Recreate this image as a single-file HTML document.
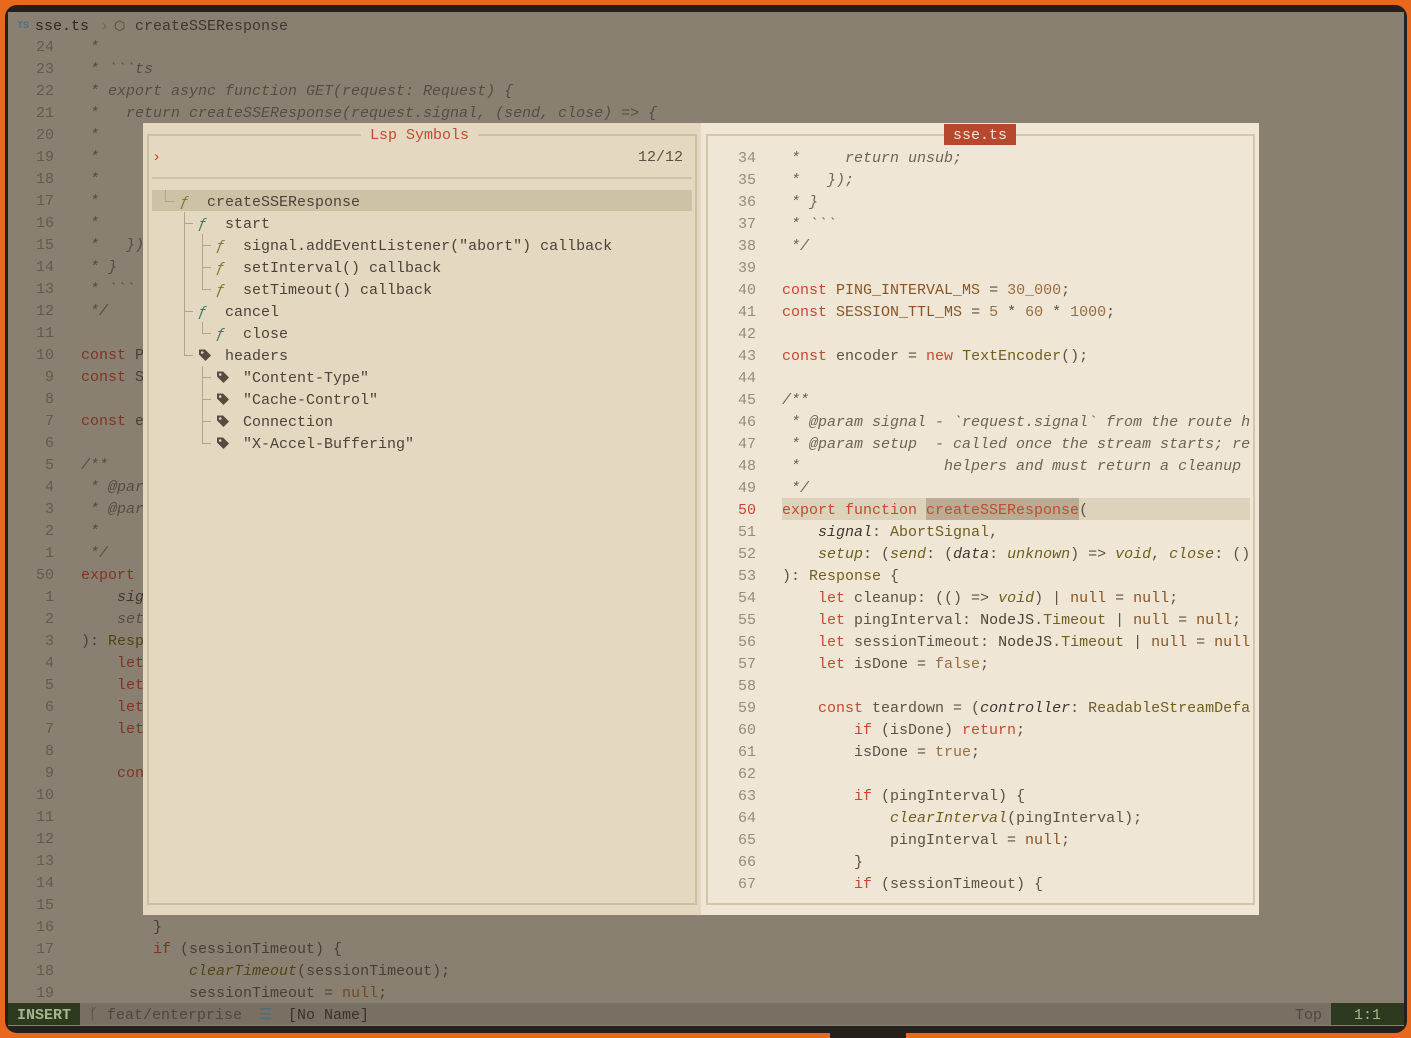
<!DOCTYPE html>
<html><head><meta charset="utf-8"><style>
*{margin:0;padding:0;box-sizing:border-box}
body{width:1411px;height:1038px;background:#e8691e;overflow:hidden;position:relative;font-family:"Liberation Mono","DejaVu Sans Mono",monospace;font-size:15px}
#win{position:absolute;left:5px;top:5px;width:1402px;height:1028px;background:#25201c;border-radius:12px}
#ed{position:absolute;left:8px;top:12px;width:1396px;height:1014px;background:#8a8072;overflow:hidden}
.r{position:absolute;height:22px;line-height:22px;white-space:pre}
#lines{position:absolute;left:0;top:25px}
#lines div{height:22px;line-height:22px;white-space:pre;color:#463f36}
#lines b{display:inline-block;width:46px;text-align:right;color:#625a4f;font-weight:normal;margin-right:27px}
.c{color:#554d42;font-style:italic}
.k{color:#7e3423}
.t{color:#4e4518}
#sb{position:absolute;left:0;top:991px;width:1396px;height:22px;background:#787062;line-height:25px;color:#4a443a}
#pop{position:absolute;left:143px;top:123px;width:1116px;height:792px}
#lp{position:absolute;left:0;top:0;width:558px;height:792px;background:#e4d8c1}
#lb{position:absolute;left:4px;top:11px;width:550px;height:771px;border:2px solid #cbbfa3}
#rp{position:absolute;left:558px;top:0;width:558px;height:792px;background:#f0e6d6}
#rb{position:absolute;left:5px;top:11px;width:549px;height:771px;border:2px solid #d3c6ab}
#tree{position:absolute;left:10px;top:69px}
#tree div{height:22px;line-height:22px;white-space:pre;color:#4b433a}
.fo{color:#8a7626;font-style:italic}
.fg{color:#3d7a66;font-style:italic}
.v,.h{position:absolute;background:#b0a489}
.v{width:1px}.h{height:1px}
.tg{display:inline-block;width:14px;height:14px;margin-right:-5px;vertical-align:-2px}
#rcode{position:absolute;left:0;top:25px;width:549px;height:758px;overflow:hidden}
#rcode div{height:22px;line-height:22px;white-space:pre;color:#5a5247}
#rcode b{display:inline-block;width:55px;text-align:right;color:#958b7c;font-weight:normal;margin-right:26px}
.K{color:#c24a32}
.C{color:#6c6458;font-style:italic}
.N{color:#9a6c3e}
.T{color:#6e5f1c}
.V{color:#8a5424}
.P{color:#4a4238}
.I{font-style:italic;color:#3e372f}
.IT{font-style:italic;color:#6e5f1c}
</style></head><body>
<div id="win"></div>
<div style="position:absolute;left:830px;top:1030px;width:76px;height:8px;background:#25201c"></div>
<div id="ed">
<div class="r" style="left:9px;top:4px;font-size:10px;color:#4d6f8a;font-weight:bold">TS</div>
<div class="r" style="left:27px;top:4px;color:#2e2822">sse.ts</div>
<div class="r" style="left:92px;top:4px;color:#6e665a">›</div>
<div class="r" style="left:106px;top:4px;color:#4a433a;font-size:13px">⬡</div>
<div class="r" style="left:127px;top:4px;color:#3e372f">createSSEResponse</div>
<div id="lines">
<div><b>24</b><span class="c"> *</span></div>
<div><b>23</b><span class="c"> * &#96;&#96;&#96;ts</span></div>
<div><b>22</b><span class="c"> * export async function GET(request: Request) {</span></div>
<div><b>21</b><span class="c"> *   return createSSEResponse(request.signal, (send, close) =&gt; {</span></div>
<div><b>20</b><span class="c"> *</span></div>
<div><b>19</b><span class="c"> *</span></div>
<div><b>18</b><span class="c"> *</span></div>
<div><b>17</b><span class="c"> *</span></div>
<div><b>16</b><span class="c"> *</span></div>
<div><b>15</b><span class="c"> *   });</span></div>
<div><b>14</b><span class="c"> * }</span></div>
<div><b>13</b><span class="c"> * &#96;&#96;&#96;</span></div>
<div><b>12</b><span class="c"> */</span></div>
<div><b>11</b></div>
<div><b>10</b><span class="k">const</span> PING</div>
<div><b>9</b><span class="k">const</span> SESS</div>
<div><b>8</b></div>
<div><b>7</b><span class="k">const</span> enc</div>
<div><b>6</b></div>
<div><b>5</b><span class="c">/**</span></div>
<div><b>4</b><span class="c"> * @param</span></div>
<div><b>3</b><span class="c"> * @param</span></div>
<div><b>2</b><span class="c"> *</span></div>
<div><b>1</b><span class="c"> */</span></div>
<div><b>50</b><span class="k">export</span> function</div>
<div><b>1</b>    <span class="c" style="color:#3e372f">signal</span></div>
<div><b>2</b>    <span class="c">setup</span></div>
<div><b>3</b>): <span class="t">Response</span></div>
<div><b>4</b>    <span class="k">let</span> x</div>
<div><b>5</b>    <span class="k">let</span> x</div>
<div><b>6</b>    <span class="k">let</span> x</div>
<div><b>7</b>    <span class="k">let</span> x</div>
<div><b>8</b></div>
<div><b>9</b>    <span class="k">const</span> x</div>
<div><b>10</b></div>
<div><b>11</b></div>
<div><b>12</b></div>
<div><b>13</b></div>
<div><b>14</b></div>
<div><b>15</b></div>
<div><b>16</b>        }</div>
<div><b>17</b>        <span class="k">if</span> (sessionTimeout) {</div>
<div><b>18</b>            <span class="c" style="color:#4e4518">clearTimeout</span>(sessionTimeout);</div>
<div><b>19</b>            sessionTimeout = <span class="k" style="color:#6e4a26">null</span>;</div>
</div>
<div id="sb">
<div style="position:absolute;left:0;top:0;width:72px;height:22px;background:#2e3a20;color:#a7b58d;text-align:center;font-weight:bold">INSERT</div>
<div style="position:absolute;left:81px;top:0;color:#4e473c">ᚴ feat/enterprise</div>
<div style="position:absolute;left:251px;top:0;color:#4f6a7c">☰</div>
<div style="position:absolute;left:280px;top:0;color:#38322a">[No Name]</div>
<div style="position:absolute;left:1287px;top:0;color:#4e473c">Top</div>
<div style="position:absolute;left:1323px;top:0;width:73px;height:22px;background:#2e3a20;color:#a7b58d;text-align:center">1:1</div>
</div>
</div>

<div id="pop">
<div id="lp"><div id="lb"></div>
<div class="r" style="left:218px;top:2px;background:#e4d8c1;padding:0 9px;color:#c24a32">Lsp Symbols</div>
<div class="r" style="left:9px;top:24px;color:#c24a32">›</div>
<div class="r" style="left:495px;top:24px;color:#5a5247">12/12</div>
<div style="position:absolute;left:9px;top:54px;width:540px;height:2px;background:#cfc3a8"></div>
<div style="position:absolute;left:9px;top:67px;width:540px;height:21px;background:#cdc2a5"></div>
<div class="v" style="left:22px;top:67px;height:12px"></div><div class="h" style="left:22px;top:78px;width:10px"></div>
<div class="v" style="left:41px;top:89px;height:144px"></div>
<div class="h" style="left:41px;top:100px;width:9px"></div><div class="h" style="left:41px;top:188px;width:9px"></div><div class="h" style="left:41px;top:232px;width:9px"></div>
<div class="v" style="left:59px;top:111px;height:56px"></div>
<div class="h" style="left:59px;top:122px;width:9px"></div><div class="h" style="left:59px;top:144px;width:9px"></div><div class="h" style="left:59px;top:166px;width:9px"></div>
<div class="v" style="left:59px;top:199px;height:12px"></div><div class="h" style="left:59px;top:210px;width:9px"></div>
<div class="v" style="left:59px;top:243px;height:78px"></div>
<div class="h" style="left:59px;top:254px;width:9px"></div><div class="h" style="left:59px;top:276px;width:9px"></div><div class="h" style="left:59px;top:298px;width:9px"></div><div class="h" style="left:59px;top:320px;width:9px"></div>
<div id="tree">
<div>   <span class="fo">ƒ</span>  createSSEResponse</div>
<div>     <span class="fg">ƒ</span>  start</div>
<div>       <span class="fo">ƒ</span>  signal.addEventListener("abort") callback</div>
<div>       <span class="fo">ƒ</span>  setInterval() callback</div>
<div>       <span class="fo">ƒ</span>  setTimeout() callback</div>
<div>     <span class="fg">ƒ</span>  cancel</div>
<div>       <span class="fg">ƒ</span>  close</div>
<div>     <svg class="tg" viewBox="0 0 14 14"><path d="M1 1.5h6l6 6-5.5 5.5-6.5-6.5z" fill="#554b3e"/><circle cx="4.2" cy="4.5" r="1.3" fill="#e4d8c1"/></svg>  headers</div>
<div>       <svg class="tg" viewBox="0 0 14 14"><path d="M1 1.5h6l6 6-5.5 5.5-6.5-6.5z" fill="#554b3e"/><circle cx="4.2" cy="4.5" r="1.3" fill="#e4d8c1"/></svg>  "Content-Type"</div>
<div>       <svg class="tg" viewBox="0 0 14 14"><path d="M1 1.5h6l6 6-5.5 5.5-6.5-6.5z" fill="#554b3e"/><circle cx="4.2" cy="4.5" r="1.3" fill="#e4d8c1"/></svg>  "Cache-Control"</div>
<div>       <svg class="tg" viewBox="0 0 14 14"><path d="M1 1.5h6l6 6-5.5 5.5-6.5-6.5z" fill="#554b3e"/><circle cx="4.2" cy="4.5" r="1.3" fill="#e4d8c1"/></svg>  Connection</div>
<div>       <svg class="tg" viewBox="0 0 14 14"><path d="M1 1.5h6l6 6-5.5 5.5-6.5-6.5z" fill="#554b3e"/><circle cx="4.2" cy="4.5" r="1.3" fill="#e4d8c1"/></svg>  "X-Accel-Buffering"</div>
</div>
</div>
<div id="rp"><div id="rb"></div>
<div class="r" style="left:243px;top:1px;width:72px;height:21px;line-height:23px;background:#b8472f;color:#f4e6d4;text-align:center">sse.ts</div>
<div style="position:absolute;left:81px;top:375px;width:468px;height:22px;background:#ddd2ba"></div>
<div style="position:absolute;left:225px;top:375px;width:153px;height:22px;background:#b9ac92"></div>
<div id="rcode">
<div><b>34</b><span class="C"> *     return unsub;</span></div>
<div><b>35</b><span class="C"> *   });</span></div>
<div><b>36</b><span class="C"> * }</span></div>
<div><b>37</b><span class="C"> * &#96;&#96;&#96;</span></div>
<div><b>38</b><span class="C"> */</span></div>
<div><b>39</b></div>
<div><b>40</b><span class="K">const</span> <span class="V">PING_INTERVAL_MS</span> = <span class="N">30_000</span>;</div>
<div><b>41</b><span class="K">const</span> <span class="V">SESSION_TTL_MS</span> = <span class="N">5</span> * <span class="N">60</span> * <span class="N">1000</span>;</div>
<div><b>42</b></div>
<div><b>43</b><span class="K">const</span> encoder = <span class="K">new</span> <span class="T">TextEncoder</span>();</div>
<div><b>44</b></div>
<div><b>45</b><span class="C">/**</span></div>
<div><b>46</b><span class="C"> * @param signal - &#96;request.signal&#96; from the route handler</span></div>
<div><b>47</b><span class="C"> * @param setup  - called once the stream starts; receives</span></div>
<div><b>48</b><span class="C"> *                helpers and must return a cleanup</span></div>
<div><b>49</b><span class="C"> */</span></div>
<div><b style="color:#c24a32">50</b><span class="K">export function createSSEResponse</span>(</div>
<div><b>51</b>    <span class="I">signal</span>: <span class="T">AbortSignal</span>,</div>
<div><b>52</b>    <span class="IT">setup</span>: (<span class="IT">send</span>: (<span class="I">data</span>: <span class="IT">unknown</span>) =&gt; <span class="IT">void</span>, <span class="IT">close</span>: () =&gt; void</div>
<div><b>53</b>): <span class="T">Response</span> {</div>
<div><b>54</b>    <span class="K">let</span> cleanup: (() =&gt; <span class="IT">void</span>) | <span class="V">null</span> = <span class="V">null</span>;</div>
<div><b>55</b>    <span class="K">let</span> pingInterval: <span class="P">NodeJS</span>.<span class="T">Timeout</span> | <span class="V">null</span> = <span class="V">null</span>;</div>
<div><b>56</b>    <span class="K">let</span> sessionTimeout: <span class="P">NodeJS</span>.<span class="T">Timeout</span> | <span class="V">null</span> = <span class="V">null</span>;</div>
<div><b>57</b>    <span class="K">let</span> isDone = <span class="N">false</span>;</div>
<div><b>58</b></div>
<div><b>59</b>    <span class="K">const</span> teardown = (<span class="I">controller</span>: <span class="T">ReadableStreamDefaultController</span></div>
<div><b>60</b>        <span class="K">if</span> (isDone) <span class="K">return</span>;</div>
<div><b>61</b>        isDone = <span class="N">true</span>;</div>
<div><b>62</b></div>
<div><b>63</b>        <span class="K">if</span> (pingInterval) {</div>
<div><b>64</b>            <span class="IT">clearInterval</span>(pingInterval);</div>
<div><b>65</b>            pingInterval = <span class="V">null</span>;</div>
<div><b>66</b>        }</div>
<div><b>67</b>        <span class="K">if</span> (sessionTimeout) {</div>
</div>
</div>
</div>
</body></html>
